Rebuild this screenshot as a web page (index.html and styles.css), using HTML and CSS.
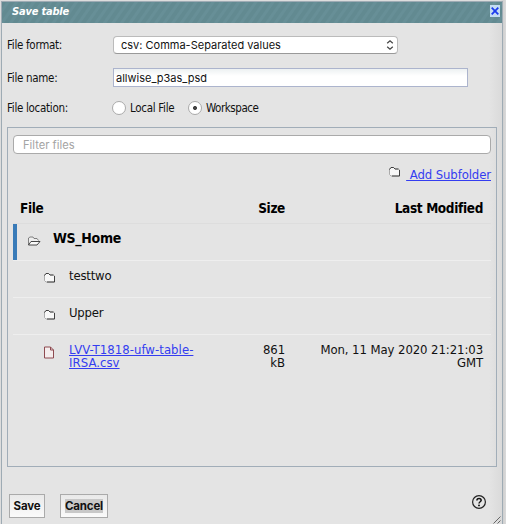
FILE: index.html
```html
<!DOCTYPE html>
<html lang="en">
<head>
<meta charset="utf-8">
<title>Save table</title>
<link rel="stylesheet" href="styles.css">
</head>
<body>
<svg class="defs" width="0" height="0">
  <symbol id="folder" viewBox="0 0 13 12"><path d="M1.5 8.5V3L3 1.5h2.5L7 3h3.5l1 1v6H3z" fill="#f8f8f8" stroke="#999" stroke-width=".8"/><path d="M1.5 3.5L3 1.5h2.5L7 3h3.5M11.5 4v6H4" fill="none" stroke="#333" stroke-width=".9"/></symbol>
</svg>
<main class="dialog">
  <header class="titlebar"><h1>Save table</h1>
    <button class="close" aria-label="Close"><svg width="10" height="12" viewBox="0 0 10 12"><path d="M1.7 2.7l6.6 6.6M8.3 2.7L1.7 9.3" stroke="#1b3bed" stroke-width="1.8"/></svg></button>
  </header>
  <div class="field format"><span class="label">File format:</span>
    <div class="select"><span>csv: Comma-Separated values</span><svg width="8" height="12" viewBox="0 0 8 12"><path d="M1.2 4.3L4 1.7l2.8 2.6M1.2 7.7L4 10.3l2.8-2.6" fill="none" stroke="#444" stroke-width="1.2"/></svg></div>
  </div>
  <div class="field name"><span class="label">File name:</span><div class="textbox"><span>allwise_p3as_psd</span></div></div>
  <div class="field location"><span class="label">File location:</span>
    <span class="radio"></span><span class="option local">Local File</span>
    <span class="radio checked"></span><span class="option workspace">Workspace</span>
  </div>
  <section class="panel">
    <div class="filter"><span>Filter files</span></div>
    <div class="add"><svg width="13" height="12"><use href="#folder"/></svg><a class="addlink">&nbsp;Add Subfolder</a></div>
    <div class="row head"><b class="file">File</b><b class="size">Size</b><b class="date">Last Modified</b></div>
    <div class="row home"><svg width="14" height="12" viewBox="0 0 14 12"><path d="M1.5 10V3L3 2h3l1 1.5h3L11.5 5.5" fill="#eee" stroke="#666" stroke-width=".8"/><path d="M1.5 10L4 6.5h9L10 10z" fill="#fafafa" stroke="#333" stroke-width=".9"/></svg><b class="homename">WS_Home</b></div>
    <div class="row item"><svg width="13" height="12"><use href="#folder"/></svg><span class="testtwo">testtwo</span></div>
    <div class="row item"><svg width="13" height="12"><use href="#folder"/></svg><span class="upper">Upper</span></div>
    <div class="row item csv"><svg width="12" height="13" viewBox="0 0 12 13"><path d="M1.5 1h6L10.5 4v8h-9z" fill="#f5eded" stroke="#8e4a50"/><path d="M7.5 1v3h3" fill="none" stroke="#8e4a50"/></svg><a class="filename"><span>LVV-T1818-ufw-table-</span><br><span>IRSA.csv</span></a><span class="size">861<br>kB</span><span class="date"><span>Mon, 11 May 2020 21:21:03</span><br>GMT</span></div>
  </section>
  <footer><button class="save">Save</button><button class="cancel"><mark>Cancel</mark></button>
    <svg class="help" width="16" height="16" viewBox="0 0 16 16"><circle cx="8" cy="8" r="6.4" fill="none" stroke="#222" stroke-width="1.2"/><path d="M5.9 6.5C5.9 3.6 10.2 3.8 10.2 6.3 10.2 7.7 8 7.8 8 9.5" fill="none" stroke="#111" stroke-width="1.5"/><circle cx="8" cy="11.4" r=".9"/></svg>
  </footer>
  <svg class="grip" width="8" height="8" viewBox="0 0 8 8"><path d="M.5 7.5l7-7M4.5 7.5l3-3" stroke="#666"/></svg>
</main>
</body>
</html>
```
FILE: styles.css
```css
* { box-sizing: border-box; }
body { margin: 0; width: 506px; height: 524px; overflow: hidden; padding: 1px 3px 0 1px; background: linear-gradient(90deg, #ddd 0 500px, #cfcfcf 503px, #dadada 506px); font: 12px/14px "DejaVu Sans Condensed", "DejaVu Sans", sans-serif; font-stretch: condensed; color: #111; }
span, b, a, h1, mark { white-space: nowrap; }
svg { display: block; flex: none; }
.defs { position: absolute; }
button { font: inherit; padding: 0; margin: 0; }
.dialog { position: relative; width: 502px; height: 523px; border: solid #9eabb4; border-width: 1px 1px 0; background: linear-gradient(90deg, #e4e4e4 0 487px, #dadada 500px); }
.titlebar { height: 21px; display: flex; justify-content: space-between; padding: 3px 2px 0 10px; background: repeating-linear-gradient(125deg, #628a91 0 3px, #678f97 4px 6px, #628a91 7px); }
h1 { margin: 0; font-size: 11px; line-height: 13px; font-weight: bold; font-style: italic; color: #fff; letter-spacing: -.2px; }
.close { width: 10px; height: 12px; border: 0; background: #c3dcf3; }
.field { display: flex; align-items: center; padding-left: 5px; }
.label { width: 106px; flex: none; font-size: 11.5px; letter-spacing: -.3px; }
.format { height: 18px; margin-top: 13px; }
.select { width: 285px; height: 18px; display: flex; align-items: center; justify-content: space-between; padding: 0 3px 0 7px; background: #fff; border: 1px solid #bbb; border-bottom-color: #999; border-radius: 4px; font: 11px/14px Inter, sans-serif; }
.name { height: 19px; margin-top: 14px; }
.textbox { width: 355px; height: 19px; border: 1px solid #acb4cd; background: linear-gradient(#edf1f2, #fff 7px); padding: 2px 2px; font: 11px/14px Inter, sans-serif; }
.location { height: 14px; margin-top: 14px; }
.radio { width: 14px; height: 14px; margin-left: -1px; border: 1px solid #aaa; border-radius: 50%; background: #fff; }
.radio.checked { background: radial-gradient(circle, #444 0 1.7px, #fff 2.3px); }
.option { margin-left: 4px; font-size: 11.5px; letter-spacing: -.3px; }
.local { width: 59px; }
.workspace { letter-spacing: -.45px; }
.panel { width: 490px; height: 340px; margin: 12px 0 0 5px; padding: 7px 5px 0; border: 1px solid #a1adb8; }
.filter { height: 19px; border: 1px solid #aaa; border-radius: 4px; background: #fff; color: #a4a4a4; padding: 2px 9px; font: 11.2px/14px Inter, sans-serif; }
.add { height: 38px; display: flex; justify-content: flex-end; padding-top: 13px; font-size: 13px; line-height: 16px; letter-spacing: -.1px; }
.add svg { margin-right: 5px; margin-top: -1px; }
a { color: #343df0; text-decoration: underline; }
.row { display: flex; font-size: 13px; line-height: 13px; }
.head { height: 32px; padding: 9px 8px 0 7px; border-bottom: 1px solid #ddd; font-size: 13.5px; line-height: 14px; letter-spacing: -.35px; color: #000; }
.head .file { width: 205px; }
.size { width: 60px; text-align: right; flex: none; }
.date { margin-left: auto; text-align: right; }
.home { height: 37px; border-bottom: 1px solid #eee; box-shadow: inset 4px 0 #397bb8; padding: 6px 0 0 14px; font-size: 14px; line-height: 16px; letter-spacing: -.3px; color: #000; }
.home svg { margin: 5px 12px 0 0; }
.item { height: 37px; border-bottom: 1px solid #eee; padding: 8px 8px 0 30px; letter-spacing: -.2px; }
.item svg { margin-top: 3px; margin-right: 13px; }
.item.csv { height: 40px; border: 0; padding-top: 8px; letter-spacing: -.08px; }
.csv svg { margin-right: 14px; }
.csv .filename { width: 150px; flex: none; letter-spacing: .05px; }
.csv .size { width: 66px; }
footer { height: 24px; display: flex; margin: 27px 0 0 7px; }
footer button { height: 24px; border: 1px solid #aaa; background: linear-gradient(#e9e9e9, #fafafa); font: bold 11.5px/14px Inter, sans-serif; letter-spacing: -.15px; color: #111; }
.save { width: 36px; }
.cancel { width: 48px; margin-left: 15px; }
mark { background: #c8c8c8; color: inherit; }
.help { margin: 0 0 0 363px; }
.grip { position: absolute; right: 1px; bottom: 0; }
```
